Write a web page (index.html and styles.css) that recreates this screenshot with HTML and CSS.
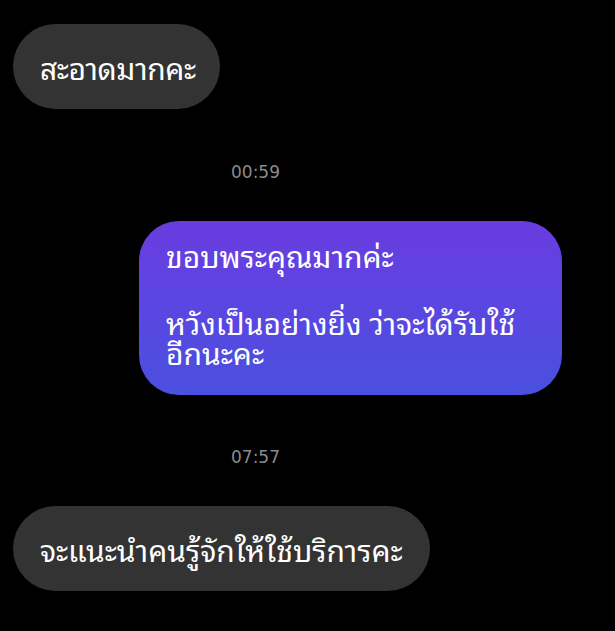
FILE: index.html
```html
<!DOCTYPE html>
<html lang="th">
<head>
<meta charset="utf-8">
<link rel="stylesheet" href="styles.css">
</head>
<body>
<div class="chat">
  <div class="row row-in first">
    <div class="bubble in">สะอาดมากคะ</div>
  </div>
  <div class="time t1">00:59</div>
  <div class="row row-out">
    <div class="bubble out">
      <p>ขอบพระคุณมากค่ะ</p>
      <p>หวังเป็นอย่างยิ่ง ว่าจะได้รับใช้<br>อีกนะคะ</p>
    </div>
  </div>
  <div class="time t2">07:57</div>
  <div class="row row-in">
    <div class="bubble in">จะแนะนำคนรู้จักให้ใช้บริการคะ</div>
  </div>
</div>
</body>
</html>
```

FILE: styles.css
```css
html, body {
  margin: 0;
  padding: 0;
  background: #000;
  height: 100%;
}
body {
  font-family: "Noto Sans Thai Looped", "Noto Sans Thai", sans-serif;
  color: #fff;
  overflow: hidden;
}
.chat {
  display: flex;
  flex-direction: column;
  padding-top: 24px;
}
.row {
  display: flex;
}
.row-in {
  padding-left: 13px;
}
.row-out {
  padding-left: 139px;
}
.bubble {
  font-size: 30px;
  line-height: 30px;
}
.bubble.in {
  background: #333333;
  height: 85px;
  border-radius: 43px;
  padding: 0 27px;
  display: flex;
  align-items: center;
  white-space: nowrap;
}
.first .bubble.in {
  padding-right: 24px;
  letter-spacing: -0.4px;
}
.bubble.out {
  width: 423px;
  box-sizing: border-box;
  height: 174px;
  border-radius: 40px;
  padding: 19px 27px 0;
  background: linear-gradient(180deg, #6a3ce0 0%, #4a50e0 100%);
}
.bubble.out p {
  margin: 0;
}
.bubble.out p + p {
  margin-top: 37px;
}
.time {
  font-family: "DejaVu Sans", sans-serif;
  font-size: 17px;
  color: #8a8a8a;
  padding-left: 231px;
  line-height: 20px;
}
.t1 {
  margin-top: 53px;
  margin-bottom: 39px;
}
.t2 {
  margin-top: 52px;
  margin-bottom: 39px;
}
```
